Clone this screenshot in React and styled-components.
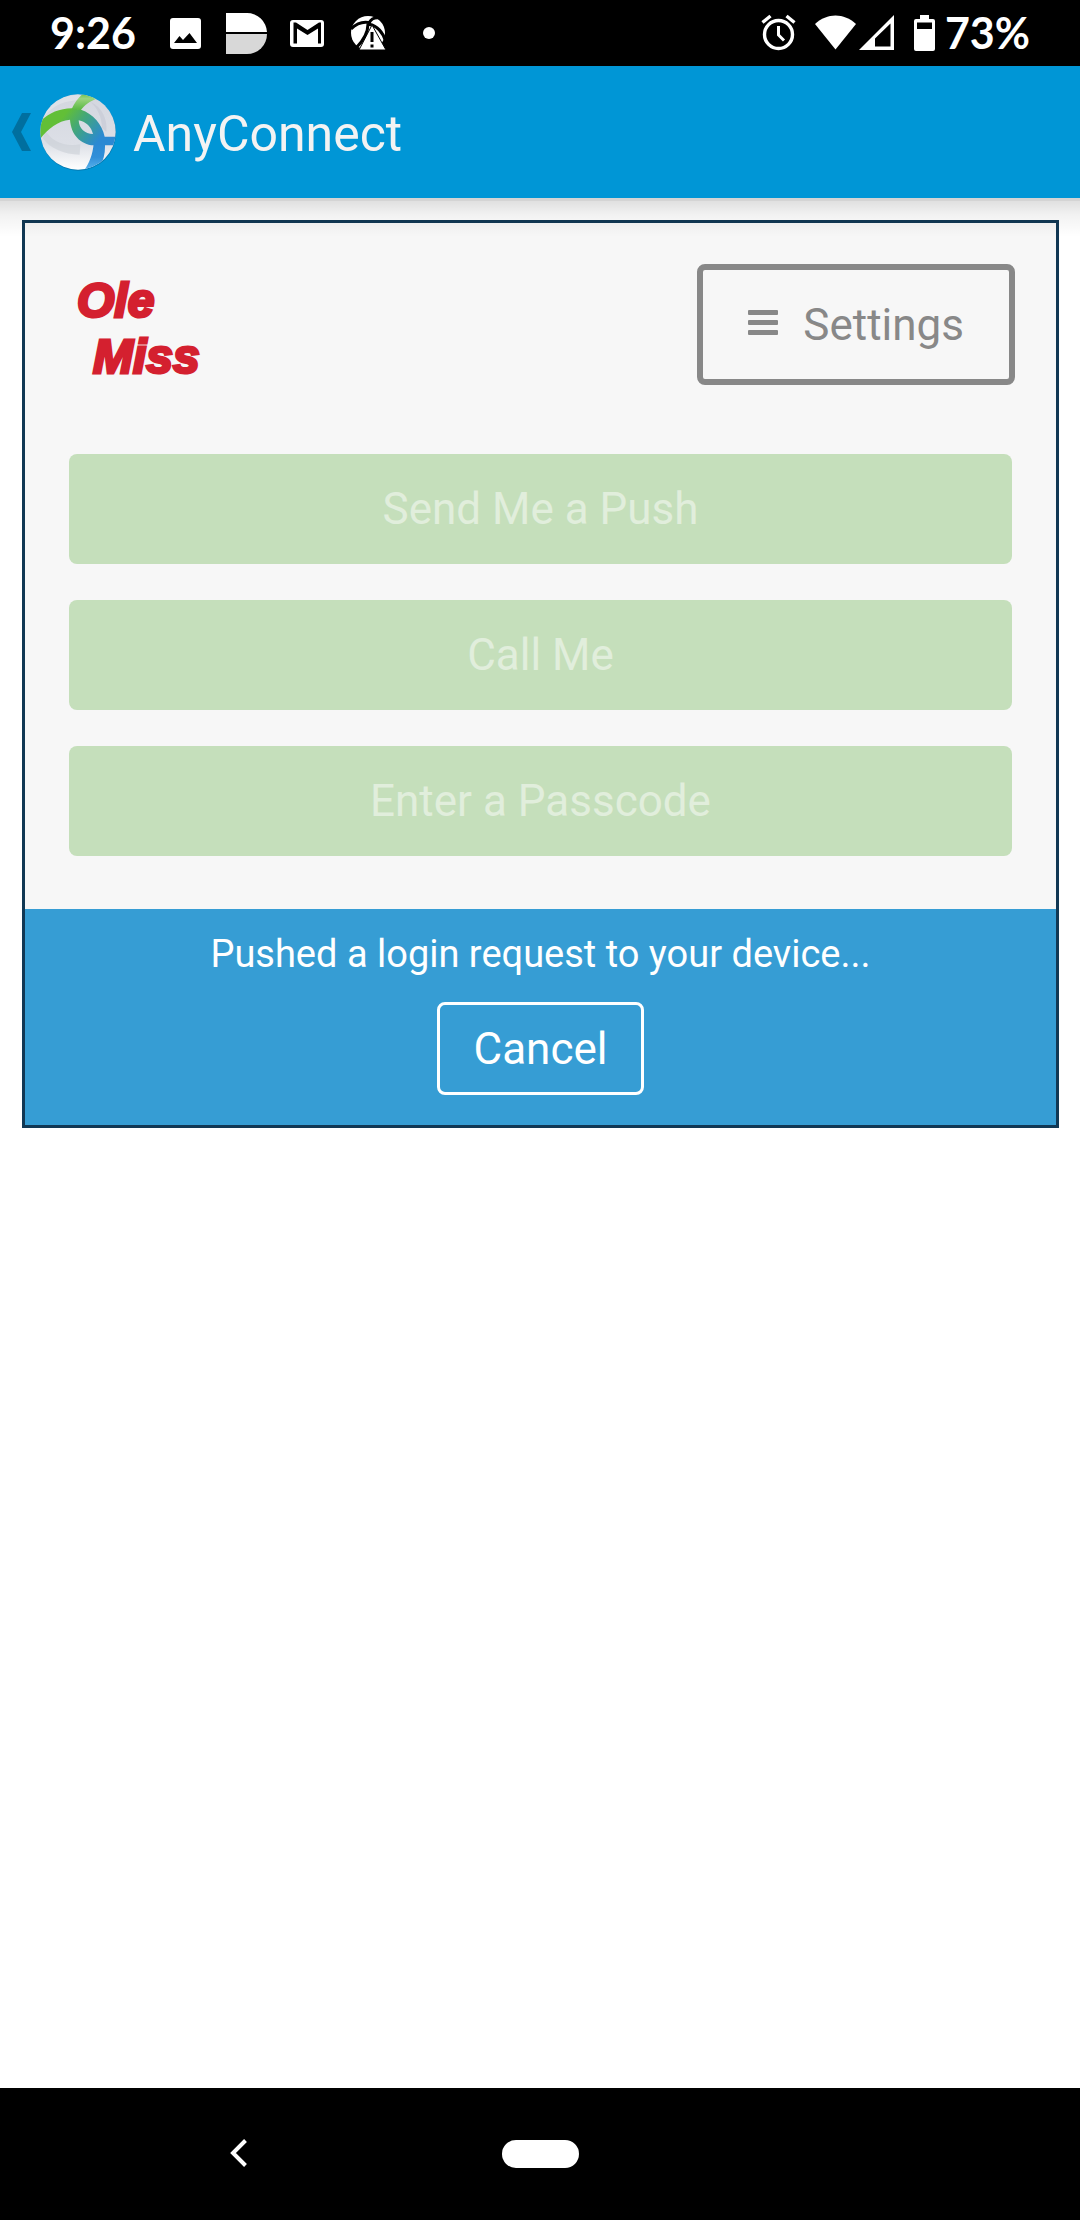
import React from "react";
import styled, { createGlobalStyle } from "styled-components";

const GlobalStyle = createGlobalStyle`
  *, *::before, *::after { box-sizing: border-box; }
  body { margin: 0; background: #fff; }
  button { font-family: inherit; cursor: pointer; }
`;

const Screen = styled.div`
  display: flex;
  flex-direction: column;
  min-height: 100vh;
  font-family: Roboto, "Liberation Sans", sans-serif;
`;

const StatusBar = styled.div`
  display: flex;
  justify-content: space-between;
  align-items: center;
  height: 66px;
  padding: 0 50px;
  background: #000;
  color: #fff;
`;

const StatusGroup = styled.div`
  display: flex;
  align-items: center;
  gap: ${(p) => p.$gap || 0}px;
`;

const StatusText = styled.span`
  min-width: ${(p) => p.$min || 0}px;
  font: 700 43px/66px Lato, sans-serif;
`;

const StatusIcon = styled.svg`
  display: block;
  height: 66px;
  overflow: visible;
`;

const AppBar = styled.header`
  position: relative;
  display: flex;
  align-items: center;
  height: 132px;
  padding: 0 12px;
  background: #0096d6;

  &::after {
    content: "";
    position: absolute;
    top: 100%;
    left: 0;
    right: 0;
    height: 39px;
    background: linear-gradient(
      rgba(0, 0, 0, 0.17) 0 3px,
      rgba(0, 0, 0, 0.12) 3px,
      rgba(0, 0, 0, 0.05) 17px,
      rgba(0, 0, 0, 0)
    );
    pointer-events: none;
  }
`;

const UpButton = styled.button`
  display: flex;
  align-items: center;
  gap: 8px;
  padding: 0;
  border: 0;
  background: none;
`;

const AppTitle = styled.h1`
  margin: 0;
  padding: 4px 0 0 16px;
  color: #f3f3f3;
  font-size: 50px;
  font-weight: 400;
  line-height: 60px;
`;

const Main = styled.main`
  flex: 1;
  padding: 22px 21px 22px 22px;
`;

const Prompt = styled.section`
  border: 3px solid #113854;
  background: #f7f7f7;
`;

const PromptHeader = styled.div`
  display: flex;
  justify-content: space-between;
  align-items: flex-start;
  padding: 41px 41px 69px 52px;
`;

const Wordmark = styled.div`
  display: flex;
  flex-direction: column;
  padding-top: 9px;
  color: #d4202f;
  font: italic 700 48px/56px "Liberation Sans", sans-serif;
  -webkit-text-stroke: 3px #d4202f;
`;

const WordmarkLine = styled.span`
  padding-left: ${(p) => (p.$indent ? 16 : 0)}px;
`;

const SettingsButton = styled.button`
  display: flex;
  align-items: center;
  gap: 25px;
  height: 121px;
  padding: 0 45px;
  border: 6px solid #888;
  border-radius: 8px;
  background: transparent;
  color: #888;
  font-size: 44px;
  line-height: 54px;
`;

const Factors = styled.div`
  display: flex;
  flex-direction: column;
  gap: 36px;
  padding: 0 44px 53px;
`;

const FactorButton = styled.button`
  height: 110px;
  border: 0;
  border-radius: 8px;
  background: #c5dfbb;
  color: #e1eedc;
  font-size: 44px;
  line-height: 54px;
`;

const Notice = styled.div`
  display: flex;
  flex-direction: column;
  align-items: center;
  gap: 24px;
  padding: 21px 44px 30px;
  background: #369dd4;
  color: #fff;
`;

const NoticeText = styled.p`
  margin: 0;
  font-size: 38px;
  line-height: 48px;
`;

const CancelButton = styled.button`
  height: 93px;
  padding: 0 34px;
  border: 3px solid #fff;
  border-radius: 8px;
  background: transparent;
  color: #fff;
  font-size: 44px;
  line-height: 54px;
`;

const NavBar = styled.nav`
  display: grid;
  grid-template-columns: 1fr auto 1fr;
  align-items: center;
  height: 132px;
  background: #000;
`;

const BackButton = styled.button`
  justify-self: center;
  padding: 0 24px 0 0;
  border: 0;
  background: none;
`;

const HomeButton = styled.button`
  width: 77px;
  height: 28px;
  padding: 0;
  border: 0;
  border-radius: 14px;
  background: #fff;
`;

function AnyConnectLogo() {
  return (
    <svg width="78" height="78" viewBox="114 100 234 234" aria-hidden="true">
      <defs>
        <linearGradient id="ball" x1="0" y1="0" x2="0" y2="1">
          <stop offset="0" stopColor="#d3d6df" />
          <stop offset="0.65" stopColor="#dcdfe6" />
          <stop offset="1" stopColor="#fff" />
        </linearGradient>
        <linearGradient id="sweep" gradientUnits="userSpaceOnUse" x1="190" y1="165" x2="292" y2="245">
          <stop offset="0" stopColor="#62bf37" />
          <stop offset="0.4" stopColor="#43a779" />
          <stop offset="1" stopColor="#2b89d3" />
        </linearGradient>
        <linearGradient id="tail" x1="0" y1="0" x2="0" y2="1">
          <stop offset="0" stopColor="#2b89d3" />
          <stop offset="0.5" stopColor="#318fd9" />
          <stop offset="1" stopColor="#5cb6ee" />
        </linearGradient>
        <linearGradient id="stem" x1="0" y1="0" x2="0" y2="1">
          <stop offset="0" stopColor="#6cc04f" />
          <stop offset="0.3" stopColor="#9bd47f" />
          <stop offset="1" stopColor="#55b740" />
        </linearGradient>
        <clipPath id="ballClip">
          <circle cx="231" cy="217" r="113" />
        </clipPath>
      </defs>
      <circle cx="232" cy="220" r="113" fill="#055c8c" opacity="0.5" />
      <circle cx="231" cy="217" r="113" fill="url(#ball)" />
      <g clipPath="url(#ballClip)">
        <path d="M134 212C150 245 190 262 238 254L236 285C190 285 145 265 126 236Z" fill="#c9ced6" opacity="0.6" />
        <path d="M268 126C302 142 320 175 316 216L303 205C302 172 290 145 268 126Z" fill="#c7cbd5" opacity="0.7" />
        <path d="M126 175C160 128 210 118 268 122L230 104L150 120Z" fill="#fff" opacity="0.25" />
        <path d="M278 252C275 285 265 310 248 334L296 322C308 302 313 280 312 252Z" fill="url(#tail)" />
        <path
          fillRule="evenodd"
          d="M112 192C140 160 175 147 212 146L240 150C276 163 303 192 311 231H346V257H278C238 254 210 225 207 180C168 184 140 208 114 242ZM233 182C234 207 252 223 276 223C271 202 256 187 233 182Z"
          fill="url(#sweep)"
        />
        <path d="M212 148C220 130 232 114 246 102L290 116C266 125 250 137 239 152Z" fill="url(#stem)" />
      </g>
    </svg>
  );
}

function NotificationIcons() {
  return (
    <>
      <StatusIcon width="31" viewBox="170 0 31 66" aria-hidden="true">
        <rect x="170" y="18" width="31" height="31" rx="3" fill="#fff" />
        <path d="M174 43L179.500 36L183 40L189.500 33L197 43Z" fill="#000" />
      </StatusIcon>
      <StatusIcon width="42" viewBox="225 0 42 66" aria-hidden="true">
        <path d="M226 13H247A20 20 0 0 1 267 32H226Z" fill="#fff" />
        <path d="M226 34H267A20 20 0 0 1 247 54H226Z" fill="#d8d8d8" />
      </StatusIcon>
      <StatusIcon width="34" viewBox="291 0 34 66" aria-hidden="true">
        <rect x="290" y="20" width="34" height="27" rx="3" fill="#fff" />
        <path d="M293.500 22.500H296L307.500 30L319 22.500H321V43.500H318V28.500L307.500 35L297 28.500V43.500H293.500Z" fill="#000" />
      </StatusIcon>
      <StatusIcon width="38" viewBox="349 0 38 66" aria-hidden="true">
        <circle cx="368" cy="33" r="17" fill="#fff" />
        <path d="M351 29C357 23 364 21 371 23M369 23C371 19 375 17 380 18M369 24C377 26 383 32 386 42M368 24C368 33 362 42 356 48" fill="none" stroke="#000" strokeWidth="3" />
        <path d="M372 25L386 50H359Z" fill="#fff" stroke="#000" strokeWidth="1" />
        <path d="M372 32V42M372 44.500V47.500" stroke="#000" strokeWidth="3" />
      </StatusIcon>
      <StatusIcon width="36" viewBox="411 0 36 66" aria-hidden="true">
        <circle cx="429" cy="33" r="6" fill="#fff" />
      </StatusIcon>
    </>
  );
}

function SystemIcons() {
  return (
    <>
      <StatusIcon width="44" viewBox="760 0 44 66" aria-hidden="true">
        <circle cx="777.500" cy="34.500" r="14" fill="none" stroke="#fff" strokeWidth="3.400" />
        <path d="M777.500 26V35L783 40.500" fill="none" stroke="#fff" strokeWidth="3" />
        <path d="M761.500 22.500L769.500 16M785.500 16L793.500 22.500" stroke="#fff" strokeWidth="3.400" />
      </StatusIcon>
      <StatusIcon width="52" viewBox="804 0 52 66" aria-hidden="true">
        <path d="M814 24C826 12.500 843 12.500 855 24L834.500 49.500Z" fill="#fff" />
      </StatusIcon>
      <StatusIcon width="48" viewBox="856 0 48 66" aria-hidden="true">
        <path fillRule="evenodd" d="M858 50L893 15V50ZM874 38.500V46.500H889.500V23.500Z" fill="#fff" />
      </StatusIcon>
      <StatusIcon width="40" viewBox="904 0 40 66" aria-hidden="true">
        <path fillRule="evenodd" d="M919 15H928V19H932Q934 19 934 21V49Q934 51 932 51H915Q913 51 913 49V21Q913 19 915 19H919ZM916 22.500V29H931V22.500Z" fill="#fff" />
      </StatusIcon>
    </>
  );
}

const factors = ["Send Me a Push", "Call Me", "Enter a Passcode"];

export default function App() {
  return (
    <Screen>
      <GlobalStyle />
      <StatusBar>
        <StatusGroup $gap={24}>
          <StatusText $min={96}>9:26</StatusText>
          <NotificationIcons />
        </StatusGroup>
        <StatusGroup>
          <SystemIcons />
          <StatusText>73%</StatusText>
        </StatusGroup>
      </StatusBar>

      <AppBar>
        <UpButton type="button" aria-label="Navigate up">
          <svg width="19" height="38" viewBox="0 0 19 38" aria-hidden="true">
            <path d="M10 0H19L9 19L19 38H10L0 19Z" fill="#006f9f" />
          </svg>
          <AnyConnectLogo />
        </UpButton>
        <AppTitle>AnyConnect</AppTitle>
      </AppBar>

      <Main>
        <Prompt>
          <PromptHeader>
            <Wordmark>
              <WordmarkLine>Ole</WordmarkLine>
              <WordmarkLine $indent>Miss</WordmarkLine>
            </Wordmark>
            <SettingsButton type="button">
              <svg width="30" height="30" viewBox="0 0 30 30" aria-hidden="true">
                <g fill="#888">
                  <rect y="0" width="30" height="5" rx="1" />
                  <rect y="10" width="30" height="5" rx="1" />
                  <rect y="20" width="30" height="5" rx="1" />
                </g>
              </svg>
              Settings
            </SettingsButton>
          </PromptHeader>
          <Factors>
            {factors.map((label) => (
              <FactorButton key={label} type="button" disabled>
                {label}
              </FactorButton>
            ))}
          </Factors>
          <Notice>
            <NoticeText role="status">Pushed a login request to your device...</NoticeText>
            <CancelButton type="button">Cancel</CancelButton>
          </Notice>
        </Prompt>
      </Main>

      <NavBar>
        <BackButton type="button" aria-label="Back">
          <svg width="18" height="28" viewBox="0 0 18 28" aria-hidden="true">
            <path d="M15.500 1.500L3 14L15.500 26.500" fill="none" stroke="#fff" strokeWidth="4" />
          </svg>
        </BackButton>
        <HomeButton type="button" aria-label="Home" />
      </NavBar>
    </Screen>
  );
}
